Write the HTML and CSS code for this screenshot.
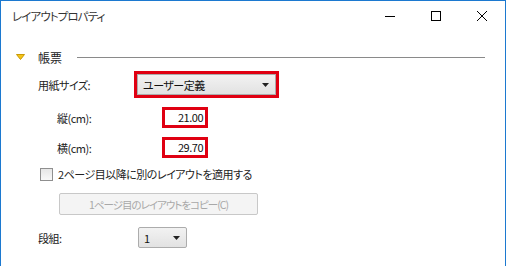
FILE: index.html
```html
<!DOCTYPE html>
<html lang="ja">
<head>
  <meta charset="UTF-8" />
  <title>レイアウトプロパティ</title>
  <link rel="stylesheet" href="styles.css">
</head>
<body>
  <div class="window">
    <div class="titlebar">
      <span class="title">レイアウトプロパティ</span>
      <div class="controls">
        <span class="ctrl">
          <svg width="10" height="10" viewBox="0 0 10 10"><path d="M0 5.5h10" stroke="#000" stroke-width="1"/></svg>
        </span>
        <span class="ctrl">
          <svg width="10" height="10" viewBox="0 0 10 10"><rect x="0.5" y="0.5" width="9" height="9" fill="none" stroke="#000" stroke-width="1"/></svg>
        </span>
        <span class="ctrl">
          <svg width="10" height="10" viewBox="0 0 10 10"><path d="M0 0L10 10M10 0L0 10" stroke="#000" stroke-width="1"/></svg>
        </span>
      </div>
    </div>

    <div class="content">
      <div class="group-header">
        <svg class="tri" width="9" height="6" viewBox="0 0 9 6"><polygon points="0.5,0.5 8.5,0.5 4.5,5.5" fill="#f6c416" stroke="#c99a06" stroke-width="1"/></svg>
        <span class="group-label">帳票</span>
        <span class="group-line"></span>
      </div>

      <div class="row row-size">
        <span class="label">用紙サイズ:</span>
        <div class="mark">
          <div class="combo combo-wide">
            <span>ユーザー定義</span>
            <svg class="arrow" width="7" height="4" viewBox="0 0 7 4"><polygon points="0,0 7,0 3.5,4" fill="#222"/></svg>
          </div>
        </div>
      </div>

      <div class="row row-sub">
        <span class="label sub">縦(cm):</span>
        <div class="mark">
          <div class="field">21.00</div>
        </div>
      </div>

      <div class="row row-sub">
        <span class="label sub">横(cm):</span>
        <div class="mark">
          <div class="field">29.70</div>
        </div>
      </div>

      <div class="row row-check">
        <span class="checkbox"></span>
        <span>2ページ目以降に別のレイアウトを適用する</span>
      </div>

      <div class="row row-button">
        <div class="button">1ページ目のレイアウトをコピー(C)</div>
      </div>

      <div class="row row-cols">
        <span class="label narrow">段組:</span>
        <div class="combo combo-small">
          <span>1</span>
          <svg class="arrow" width="7" height="4" viewBox="0 0 7 4"><polygon points="0,0 7,0 3.5,4" fill="#222"/></svg>
        </div>
      </div>
    </div>
  </div>
</body>
</html>
```

FILE: styles.css
```css
html, body {
  margin: 0;
  padding: 0;
  background: #ffffff;
}

body {
  font-family: "Noto Sans CJK JP", "Noto Sans", sans-serif;
  font-size: 11px;
  letter-spacing: -0.5px;
  font-feature-settings: "palt";
  color: #222;
}

.window {
  width: 504px;
  height: 265px;
  border: 1px solid #1c79d0;
  border-bottom: none;
  background: #fff;
  overflow: hidden;
}

/* title bar */
.titlebar {
  height: 30px;
  display: flex;
  align-items: center;
  justify-content: space-between;
}

.title {
  padding-left: 11px;
  font-size: 11.5px;
  letter-spacing: -0.9px;
  color: #333;
}

.controls {
  display: flex;
  height: 100%;
}

.ctrl {
  width: 46px;
  display: flex;
  align-items: center;
  justify-content: center;
}

/* content */
.content {
  padding-top: 18px;
}

.group-header {
  display: flex;
  align-items: center;
  height: 16px;
  padding-left: 15px;
}

.tri {
  margin-right: 13px;
}

.group-label {
  width: 39px;
  font-size: 12px;
  letter-spacing: 0;
}

.group-line {
  width: 408px;
  height: 1px;
  background: #8a8a8a;
}

.row {
  display: flex;
  align-items: center;
}

.label {
  width: 96px;
  padding-left: 37px;
}

.label.sub {
  width: 105px;
  padding-left: 56px;
}

.label.narrow {
  width: 100px;
}

.row-size {
  margin-top: 6px;
}

.row-sub {
  margin-top: 9px;
}

.row-check {
  margin-top: 8px;
  height: 16px;
  padding-left: 39px;
}

.row-button {
  margin-top: 11px;
  padding-left: 58px;
}

.row-cols {
  margin-top: 12px;
}

/* red highlight around inputs */
.mark {
  border: 3px solid #e00012;
}

.combo {
  box-sizing: border-box;
  display: flex;
  align-items: center;
  justify-content: space-between;
  border: 1px solid #acacac;
  background: linear-gradient(#f2f2f2, #e2e2e2);
  padding: 0 6px 0 5px;
  color: #111;
}

.combo-wide {
  width: 139px;
  height: 21px;
}

.combo-small {
  width: 49px;
  height: 21px;
  border-radius: 2px;
}

.field {
  box-sizing: border-box;
  width: 40px;
  height: 15px;
  line-height: 15px;
  text-align: right;
  padding-right: 2px;
  background: #fff;
  color: #111;
}

.checkbox {
  box-sizing: border-box;
  width: 13px;
  height: 13px;
  border: 1px solid #8f8f8f;
  background: linear-gradient(#e6e6e6, #f8f8f8);
  margin-right: 5px;
}

.button {
  box-sizing: border-box;
  width: 199px;
  height: 22px;
  border: 1px solid #c8c8c8;
  border-radius: 2px;
  background: #f4f4f4;
  color: #a8a8a8;
  font-size: 10.5px;
  letter-spacing: -1px;
  display: flex;
  align-items: center;
  justify-content: center;
}
```
